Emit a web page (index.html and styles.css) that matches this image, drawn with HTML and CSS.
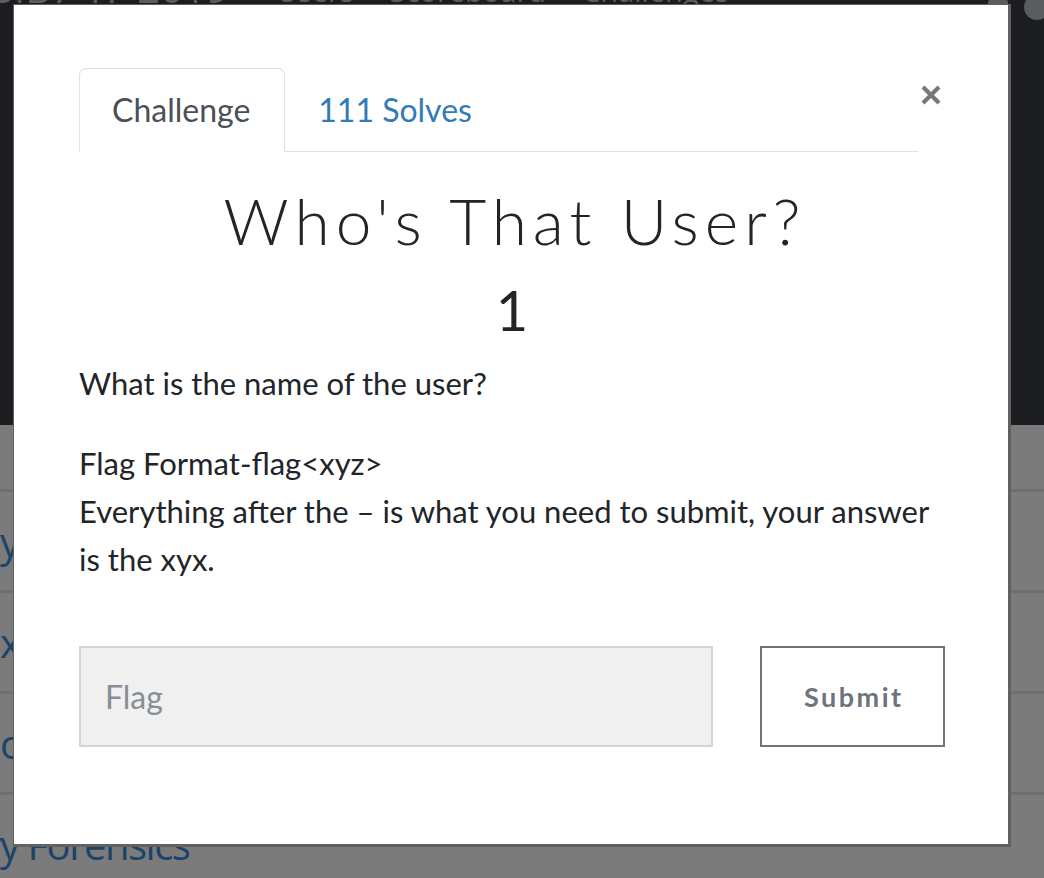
FILE: index.html
```html
<!DOCTYPE html>
<html lang="en">
<head>
<meta charset="utf-8">
<title>Challenges</title>
<link rel="stylesheet" href="styles.css">
</head>
<body>
<div class="page">
  <header class="navbar">
    <span class="brand"><span class="pre">CS</span>IB7 TF 2019</span>
    <nav class="nav-links">
      <span>Users</span>
      <span>Scoreboard</span>
      <span>Challenges</span>
    </nav>
    <span class="nav-team"></span>
    <span class="nav-user"></span>
  </header>
  <main class="board">
    <div class="board-row board-head"></div>
    <div class="board-row"><span class="cat"><span class="pre">Cryptograph</span>y</span></div>
    <div class="board-row"><span class="cat"><span class="pre">Linu</span>x</span></div>
    <div class="board-row"><span class="cat"><span class="pre">Pass</span>o</span></div>
    <div class="board-row"><span class="cat"><span class="pre">Memor</span>y Forensics</span></div>
  </main>
</div>

<div class="modal" role="dialog">
  <div class="modal-top">
    <nav class="tabs">
      <span class="tab active">Challenge</span>
      <span class="tab">111 Solves</span>
    </nav>
    <button class="close" aria-label="Close">
      <svg width="22" height="22" viewBox="0 0 22 22"><path d="M3 3 L19 19 M19 3 L3 19" stroke="#777" stroke-width="4.2" fill="none"/></svg>
    </button>
  </div>
  <h2 class="title">Who's That User?</h2>
  <h3 class="value">1</h3>
  <div class="desc">
    <p>What is the name of the user?</p>
    <p>Flag Format-flag&lt;xyz&gt;<br>Everything after the – is what you need to submit, your answer is the xyx.</p>
  </div>
  <form class="submit-row">
    <input class="flag-input" type="text" placeholder="Flag">
    <button class="submit-btn" type="button">Submit</button>
  </form>
</div>
</body>
</html>
```
FILE: styles.css
```css
html, body {
  margin: 0;
  padding: 0;
}
body {
  width: 1044px;
  height: 878px;
  overflow: hidden;
  background: #7b7b7b;
  font-family: "Lato", "Liberation Sans", sans-serif;
}
.page {
  display: flex;
  flex-direction: column;
}
.navbar {
  height: 425px;
  background: #1c1d20;
  display: flex;
  align-items: flex-start;
  color: #5b5c5f;
  overflow: hidden;
}
.navbar .brand {
  font-family: "Open Sans", sans-serif;
  font-size: 40px;
  line-height: 40px;
  margin-top: -32px;
  margin-left: 14px;
  white-space: nowrap;
}
.pre {
  display: inline-block;
  width: 0;
  direction: rtl;
  white-space: nowrap;
}
.nav-links {
  display: flex;
  gap: 36px;
  margin-left: 48px;
  font-family: "Open Sans", sans-serif;
  font-size: 29px;
  line-height: 29px;
  margin-top: -24px;
}
.nav-team {
  width: 20px;
  height: 6px;
  background: #5b5c5f;
  margin-left: auto;
  border-radius: 2px;
}
.nav-user {
  width: 26px;
  height: 26px;
  border-radius: 50%;
  background: #5b5c5f;
  margin-left: 16px;
  margin-right: -6px;
  margin-top: -6px;
}
.board {
  display: flex;
  flex-direction: column;
}
.board-row {
  height: 98px;
  border-bottom: 3px solid #6e6e6e;
  display: flex;
  align-items: center;
}
.board-head {
  height: 64px;
}
.cat {
  font-family: "Open Sans", sans-serif;
  font-size: 40px;
  letter-spacing: -1.5px;
  color: #1b4468;
  white-space: nowrap;
}

/* modal */
.modal {
  position: absolute;
  left: 13px;
  top: 4px;
  width: 998px;
  height: 843px;
  box-sizing: border-box;
  background: #fff;
  border: 1px solid #616161;
  border-right-width: 3px;
  border-bottom-width: 3px;
  padding: 63px 63px 0 65px;
  color: #212529;
}
.modal-top {
  display: flex;
  align-items: flex-start;
}
.tabs {
  flex: 0 0 839px;
  display: flex;
  border-bottom: 1px solid #dee2e6;
}
.tab {
  font-size: 32px;
  line-height: 48px;
  padding: 17px 34px 17px 32px;
  color: #337ab7;
  border: 1px solid transparent;
  margin-bottom: -1px;
}
.tab.active {
  color: #495057;
  border-color: #dee2e6 #dee2e6 #fff;
  border-radius: 7px 7px 0 0;
}
.close {
  margin-left: auto;
  margin-top: 16px;
  margin-right: 3px;
  padding: 0;
  border: 0;
  background: none;
  width: 22px;
  height: 22px;
  display: flex;
}
.title {
  margin: 30px 0 0;
  text-align: center;
  font-family: "Lato", sans-serif;
  font-weight: 300;
  font-size: 64px;
  line-height: 77px;
  letter-spacing: 6px;
  text-indent: 6px;
  color: #212529;
}
.value {
  margin: 17px 0 0;
  text-align: center;
  font-weight: 400;
  font-size: 56px;
  line-height: 67px;
  color: #212529;
}
.desc {
  margin-top: 16px;
  font-size: 31px;
  line-height: 48px;
}
.desc p {
  margin: 0 0 32px;
}
.submit-row {
  display: flex;
  margin-top: 63px;
}
.flag-input {
  width: 634px;
  height: 101px;
  box-sizing: border-box;
  background: #f0f0f0;
  border: 2px solid #cfd6df;
  padding: 0 24px;
  font-family: "Lato", sans-serif;
  font-size: 32px;
  color: #495057;
  outline: none;
}
.flag-input::placeholder {
  color: #868e96;
}
.submit-btn {
  margin-left: auto;
  width: 185px;
  height: 101px;
  box-sizing: border-box;
  background: #fff;
  border: 2px solid #6c757d;
  color: #6c757d;
  font-family: "Lato", sans-serif;
  font-weight: 700;
  font-size: 27px;
  letter-spacing: 2.5px;
  text-indent: 2.5px;
}
```
